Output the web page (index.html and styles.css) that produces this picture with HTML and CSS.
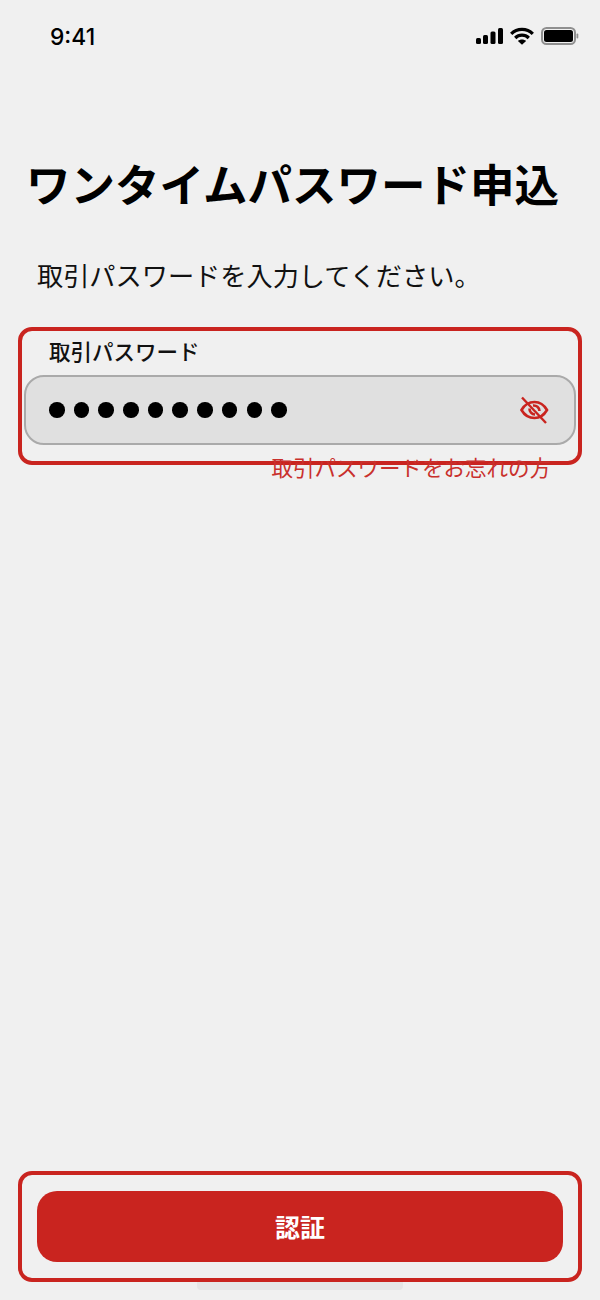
FILE: index.html
```html
<!DOCTYPE html>
<html lang="ja">
<head>
<meta charset="utf-8">
<title>ワンタイムパスワード申込</title>
<link rel="stylesheet" href="styles.css">
</head>
<body>
<div class="screen">
  <header class="status">
    <span class="time">9:41</span>
    <div class="status-icons">
      <svg class="signal" width="27" height="16" viewBox="0 0 27 16"><rect x="0" y="10" width="5" height="6" rx="1.500"/><rect x="7" y="7" width="5" height="9" rx="1.500"/><rect x="14.500" y="3.500" width="5" height="12.500" rx="1.500"/><rect x="22" y="0" width="5" height="16" rx="1.500"/></svg>
      <svg class="wifi" width="24" height="18" viewBox="0 0 24 18" fill="none" stroke="#000" stroke-width="3.200"><path d="M1.200 6.800C7 .9 17 .9 22.800 6.800"/><path d="M5.200 11C9 7.200 15 7.200 18.800 11"/><path d="M12 17.800 7.900 13.900C10.200 11.900 13.800 11.900 16.100 13.900Z" fill="#000" stroke="none"/></svg>
      <svg class="battery" width="38" height="18" viewBox="0 0 38 18"><rect x="1" y="1" width="33" height="16" rx="4.500" fill="none" stroke="#8f8f8f" stroke-width="2"/><rect x="3" y="3" width="29" height="12" rx="2.500" fill="#000"/><rect x="35.500" y="6.500" width="1.800" height="5" rx="0.900" fill="#8f8f8f"/></svg>
    </div>
  </header>

  <h1 class="title">ワンタイムパスワード申込</h1>
  <p class="lead">取引パスワードを入力してください。</p>

  <section class="outline field-box">
    <label class="field-label">取引パスワード</label>
    <div class="input">
      <div class="dots">
        <i class="dot"></i><i class="dot"></i><i class="dot"></i><i class="dot"></i><i class="dot"></i>
        <i class="dot"></i><i class="dot"></i><i class="dot"></i><i class="dot"></i><i class="dot"></i>
      </div>
      <svg class="eye" width="30" height="30" viewBox="0 0 30 30" fill="none" stroke="#c9241f" stroke-width="2.600">
        <path d="M2.500 15C5.500 9.800 10 7 15.500 7C21 7 25 9.800 28 15C25 20.200 21 23 15.500 23C10 23 5.500 20.200 2.500 15Z"/>
        <path d="M10.500 13.500C10.300 16.800 12.800 19.500 16 19.500"/>
        <path d="M14 10.500C17.500 10.200 20.300 12.500 20.500 16"/>
        <path d="M3 2.500 27 28" stroke-width="2.400"/>
      </svg>
    </div>
  </section>
  <a class="forgot">取引パスワードをお忘れの方</a>

  <div class="spacer"></div>

  <div class="outline button-box">
    <button class="submit">認証</button>
  </div>
  <div class="home-indicator"></div>
</div>
</body>
</html>
```
FILE: styles.css
```css
* { box-sizing: border-box; }
html, body { margin: 0; padding: 0; }
body {
  background: #f0f0f0;
  font-family: "Noto Sans CJK JP", "Noto Sans", sans-serif;
  color: #000;
}
.screen {
  width: 600px;
  height: 1300px;
  display: flex;
  flex-direction: column;
  overflow: hidden;
}
.status {
  display: flex;
  justify-content: space-between;
  align-items: center;
  height: 28px;
  margin-top: 23px;
  padding: 0 21px 0 50px;
}
.time {
  font-family: Inter, "Liberation Sans", sans-serif;
  font-size: 22.800px;
  font-weight: 500;
  line-height: 28px;
}
.status-icons { display: flex; align-items: center; gap: 7px; margin-top: -2px; }
.signal { fill: #000; }
.title {
  margin: 101px 0 0 26px;
  font-size: 44.500px;
  font-weight: 700;
  line-height: 62px;
  white-space: nowrap;
}
.lead {
  margin: 43px 0 0 37px;
  font-size: 26.200px;
  font-weight: 400;
  line-height: 36px;
  white-space: nowrap;
  color: #111;
}
.outline {
  border: 4px solid #c9241f;
  border-radius: 14px;
  margin: 0 18px;
}
.field-box {
  margin-top: 34px;
  height: 138px;
  padding: 0 2px;
}
.field-label {
  display: block;
  margin: 5px 0 0 25px;
  height: 39px;
  font-size: 21.500px;
  font-weight: 500;
  line-height: 30px;
  color: #111;
}
.input {
  display: flex;
  align-items: center;
  justify-content: space-between;
  height: 70px;
  padding: 0 25px 0 23px;
  background: #e0e0e0;
  border: 2px solid #aaa;
  border-radius: 20px;
}
.dots { display: flex; gap: 9.200px; }
.dot {
  display: block;
  width: 15.500px;
  height: 15.500px;
  border-radius: 50%;
  background: #000;
}
.forgot {
  align-self: flex-end;
  margin: -13px 49px 0 0;
  font-size: 21.500px;
  line-height: 30px;
  color: #c9302c;
  white-space: nowrap;
}
.spacer { flex: 1; }
.button-box {
  height: 111px;
  padding: 16px 15px 0;
}
.submit {
  display: block;
  width: 100%;
  height: 71px;
  border: 0;
  border-radius: 20px;
  background: #c9241f;
  color: #fff;
  font-family: inherit;
  font-size: 25px;
  font-weight: 700;
  padding: 0 0 2px;
}
.home-indicator {
  width: 206px;
  height: 8px;
  margin: 0 auto 10px;
  background: #e6e6e6;
  border-radius: 0 0 4px 4px;
}
```
